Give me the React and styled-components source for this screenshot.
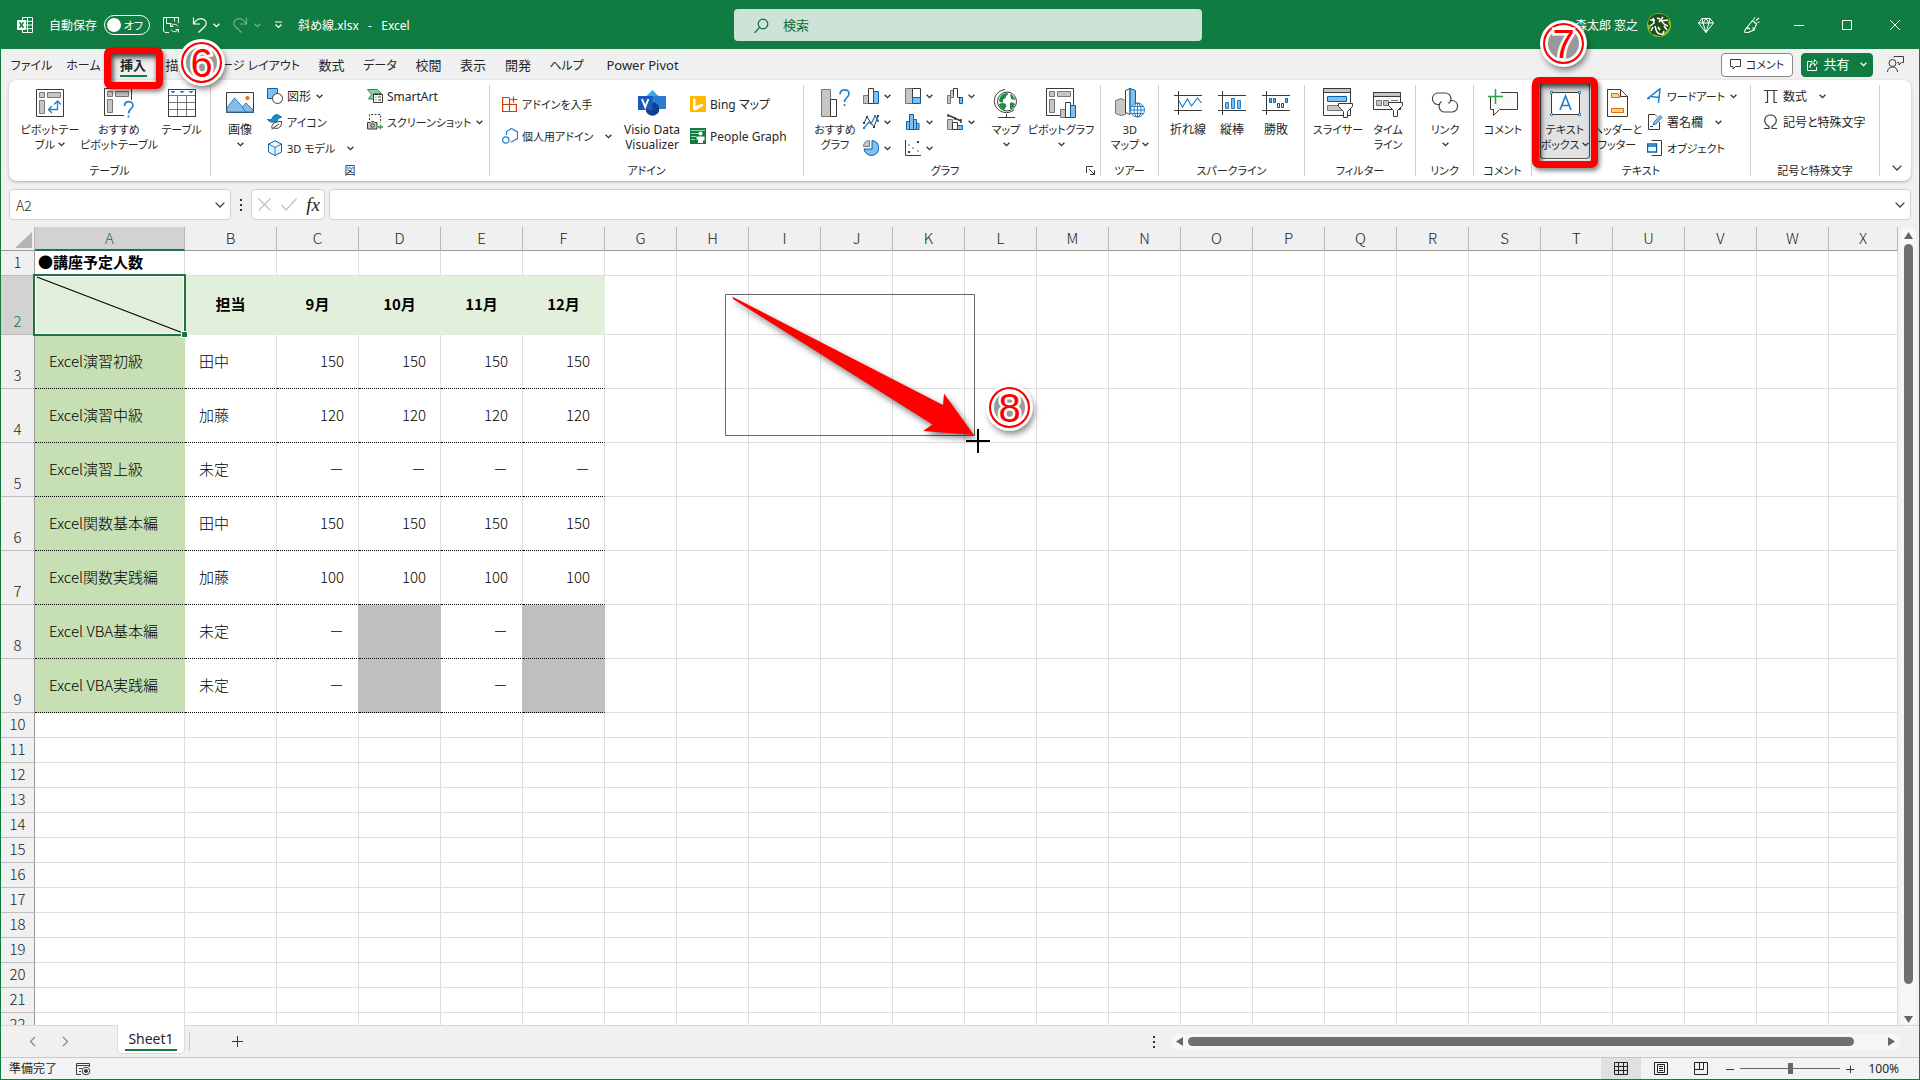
import React from "react";
import styled, { createGlobalStyle, css } from "styled-components";

const GREEN = "#107c41";
const INK = "#3b3a38";
const GREY = "#c8c6c4";
const SKY = "#83beec";
const BLUE = "#1e7fcb";
const UI = '"Noto Sans", "Noto Sans CJK JP", sans-serif';
const CELL = '"Noto Sans CJK JP", sans-serif';

const Global = createGlobalStyle`
  *, *::before, *::after { box-sizing: border-box; }
  body { margin: 0; background: #f0f0f0; overflow: hidden; }
  button, input { font: inherit; color: inherit; }
  button { border: 0; padding: 0; background: none; cursor: default; }
  svg { display: block; flex: none; }
`;

/* ---------- window ---------- */

const Window = styled.div`
  display: flex;
  flex-direction: column;
  height: 100vh;
  border: 1px solid ${GREEN};
  background: #f0f0f0;
  color: #262626;
  font: 12px/15px ${UI};
  font-feature-settings: "palt";
`;

const TitleBar = styled.header`
  display: flex;
  align-items: center;
  flex: none;
  height: 48px;
  background: ${GREEN};
  color: #fff;
`;

const TitleLeft = styled.div`
  flex: 1;
  display: flex;
  align-items: center;
  gap: 13px;
  padding-left: 16px;
  white-space: nowrap;
`;

const FileName = styled.span`
  margin-left: 2px;
  white-space: pre;
`;

const AutoSave = styled.label`
  display: flex;
  align-items: center;
  gap: 7px;
  margin-left: 3px;
`;

const Toggle = styled.span`
  position: relative;
  display: flex;
  align-items: center;
  justify-content: flex-end;
  width: 46px;
  height: 20px;
  padding-right: 6px;
  border: 1px solid #fff;
  border-radius: 10px;
  font-size: 11px;
  input {
    position: absolute;
    left: 2px;
    width: 14px;
    height: 14px;
    margin: 0;
    appearance: none;
    border-radius: 50%;
    background: #fff;
  }
`;

const QuickButton = styled.button`
  display: flex;
  align-items: center;
  gap: 6px;
  opacity: ${(p) => (p.$dim ? 0.4 : 1)};
`;

const Search = styled.label`
  display: flex;
  align-items: center;
  gap: 14px;
  width: 468px;
  height: 32px;
  padding: 0 20px;
  border-radius: 4px;
  background: #cfe2d7;
  color: ${GREEN};
  input {
    flex: 1;
    min-width: 0;
    padding: 0;
    border: 0;
    outline: 0;
    background: none;
    font-size: 13px;
  }
  input::placeholder { color: #0f6b39; opacity: 1; }
`;

const TitleRight = styled.div`
  flex: 1;
  display: flex;
  align-items: center;
  justify-content: flex-end;
`;

const Avatar = styled.span`
  display: block;
  margin: 0 12px 0 9px;
`;

const WindowButton = styled.button`
  display: flex;
  align-items: center;
  justify-content: center;
  width: ${(p) => (p.$tool ? 46 : 48)}px;
  height: 48px;
`;

/* ---------- ribbon tabs ---------- */

const TabRow = styled.nav`
  display: flex;
  align-items: center;
  flex: none;
  height: 31px;
  padding: 0 15px 0 4px;
`;

const Tab = styled.button`
  position: relative;
  width: ${(p) => p.$w}px;
  height: 31px;
  padding-top: 2px;
  display: flex;
  align-items: center;
  justify-content: center;
  white-space: nowrap;
  font-size: ${(p) => (p.$kana ? 12 : 13)}px;
  ${(p) =>
    p.$active &&
    css`
      font-weight: 700;
      &::after {
        content: "";
        position: absolute;
        left: 11px;
        right: 10px;
        bottom: 3px;
        height: 2px;
        background: ${GREEN};
      }
    `}
`;

const TabActions = styled.div`
  display: flex;
  align-items: center;
  gap: 8px;
  margin-left: auto;
`;

const ActionButton = styled.button`
  display: flex;
  align-items: center;
  justify-content: center;
  gap: 5px;
  width: 72px;
  height: 24px;
  border-radius: 4px;
  border: 1px solid ${(p) => (p.$primary ? GREEN : "#8a8886")};
  background: ${(p) => (p.$primary ? GREEN : "#fff")};
  color: ${(p) => (p.$primary ? "#fff" : "#262626")};
  font-size: ${(p) => (p.$primary ? 13 : 11)}px;
  white-space: nowrap;
  svg:nth-of-type(2) { margin-left: 5px; }
`;

const PlainButton = styled.button`
  margin-left: 6px;
`;

/* ---------- ribbon ---------- */

const RibbonCard = styled.section`
  display: flex;
  flex: none;
  height: 101px;
  margin: 0 8px;
  border-radius: 8px;
  background: #fff;
  box-shadow: 0 1px 3px rgba(0, 0, 0, 0.28);
`;

const Group = styled.div`
  display: flex;
  flex-direction: column;
  flex: none;
  width: ${(p) => p.$w}px;
  padding-top: 3px;
`;

const GroupBody = styled.div`
  display: flex;
  height: 78px;
  padding-left: ${(p) => p.$pad}px;
`;

const GroupLabel = styled.div`
  display: flex;
  height: 15px;
  margin-top: 2px;
  font-size: 11px;
  span { flex: 1; text-align: center; }
  button { width: 12px; margin-right: 2px; }
`;

const Divider = styled.div`
  flex: none;
  width: 1px;
  margin: 5px 0;
  background: #d2d0ce;
`;

const BigButton = styled.button`
  position: relative;
  display: flex;
  flex-direction: column;
  align-items: center;
  flex: none;
  width: ${(p) => p.$w}px;
  height: 76px;
  padding-top: 6px;
  white-space: nowrap;
  font-size: ${(p) => (p.$kana ? 11 : 12)}px;
  ${(p) =>
    p.$pressed &&
    css`
      border-radius: 4px;
      background: #e2e2e2;
      box-shadow: inset 0 0 0 1px #555;
    `}
`;

const IconBox = styled.span`
  display: flex;
  align-items: center;
  justify-content: center;
  height: 28px;
  margin-bottom: 5px;
`;

const BigLine = styled.span`
  display: flex;
  align-items: center;
  justify-content: center;
  gap: 3px;
  height: 15px;
`;

const Stack = styled.div`
  display: flex;
  flex-direction: column;
  flex: none;
  width: ${(p) => p.$w}px;
  padding-top: ${(p) => (p.$two ? 5 : 0)}px;
  button { height: ${(p) => (p.$two ? 32 : 26)}px; }
`;

const SmallButton = styled.button`
  display: flex;
  align-items: center;
  padding-left: 3px;
  white-space: nowrap;
  font-size: ${(p) => (p.$kana ? 11 : 12)}px;
  span { margin-left: 4px; }
  svg + span + svg { margin-left: ${(p) => p.$gap || 5}px; }
  svg + svg { margin-left: 5px; }
`;

const Collapse = styled.button`
  align-self: flex-end;
  padding: 10px 12px;
`;

/* ---------- formula bar ---------- */

const FormulaRow = styled.div`
  display: flex;
  align-items: center;
  flex: none;
  height: 31px;
  margin: 8px 8px 7px;
`;

const Field = styled.div`
  display: flex;
  align-items: center;
  height: 31px;
  border: 1px solid #d2d2d2;
  border-radius: 4px;
  background: #fff;
  ${(p) => (p.$w ? `width: ${p.$w}px;` : "flex: 1;")}
  justify-content: ${(p) => (p.$spread ? "space-between" : "flex-start")};
  padding: 0 ${(p) => (p.$spread ? 4 : 5)}px 0 6px;
  margin-right: ${(p) => (p.$spread ? 4 : 0)}px;
  input {
    flex: 1;
    min-width: 0;
    padding: 0;
    border: 0;
    outline: 0;
    background: none;
    font: 300 14px/20px ${CELL};
  }
`;

const Dots = styled.span`
  display: grid;
  gap: 3px;
  width: 2px;
  margin: 0 ${(p) => (p.$wide ? 16 : 9)}px 0 9px;
  i { width: 2px; height: 2px; background: #333; }
`;

const Fx = styled.button`
  font: italic 19px/24px "Liberation Serif", serif;
  color: #222;
`;

/* ---------- worksheet ---------- */

const SheetArea = styled.main`
  display: flex;
  flex: 1;
  min-height: 0;
  gap: 2px;
  padding-right: 3px;
`;

const SheetCanvas = styled.div`
  position: relative;
  flex: 1;
  min-width: 0;
  overflow: hidden;
`;

const Grid = styled.table`
  width: 100%;
  table-layout: fixed;
  border-collapse: separate;
  border-spacing: 0;
  background: #fff;
  color: #000;
  font: 15px/22px ${CELL};
  font-feature-settings: normal;
  th, td { white-space: nowrap; overflow: visible; }
`;

const ColHead = styled.th`
  height: 24px;
  padding: 0 0 1px;
  border-right: 1px solid #b8b8b8;
  border-bottom: ${(p) => (p.$on ? "2px solid #217346" : "1px solid #9b9b9b")};
  background: ${(p) => (p.$on ? "#d2d2d2" : "#f0f0f0")};
  color: ${(p) => (p.$on ? "#217346" : "#222")};
  font-weight: 300;
  line-height: 20px;
`;

const Corner = styled(ColHead)`
  svg { margin: 3px 2px 0 auto; }
`;

const RowHead = styled.th`
  height: ${(p) => p.$h}px;
  padding: 0 0 2px;
  vertical-align: bottom;
  border-right: 1px solid #9b9b9b;
  border-bottom: 1px solid #bdbdbd;
  background: ${(p) => (p.$on ? "#d2d2d2" : "#f0f0f0")};
  color: ${(p) => (p.$on ? "#217346" : "#222")};
  font-weight: 300;
  line-height: 22px;
`;

const Cell = styled.td`
  position: relative;
  border-right: 1px solid ${(p) => p.$line || p.$fill || "#dedede"};
  border-bottom: 1px ${(p) => (p.$dotted ? "dotted #000" : `solid ${p.$fill || "#dedede"}`)};
  background: ${(p) => p.$fill || "#fff"};
  text-align: ${(p) => p.$align || "left"};
  font-weight: ${(p) => (p.$bold ? 700 : 300)};
  padding: 0 ${(p) => (p.$flush ? 0 : 14)}px 2px ${(p) => (p.$flush ? 3 : 14)}px;
`;

const Selection = styled.div`
  position: absolute;
  z-index: 1;
  inset: -2px;
  border: 2px solid #217346;
  box-shadow: inset 0 0 0 1px #fff;
  svg { width: 100%; height: 100%; }
  &::after {
    content: "";
    position: absolute;
    right: -4px;
    bottom: -4px;
    width: 7px;
    height: 7px;
    border: 1px solid #fff;
    background: #217346;
  }
`;

const Drawing = styled.svg`
  position: absolute;
  z-index: 2;
  left: 719px;
  top: 60px;
  overflow: visible;
`;

const Scroll = styled.div`
  display: flex;
  flex-direction: ${(p) => (p.$v ? "column" : "row")};
  align-items: center;
  gap: 5px;
  padding: ${(p) => (p.$v ? "5px 0" : "0 5px")};
  border-radius: 8px;
  background: #f7f7f7;
  ${(p) => (p.$v ? "width: 16px; margin-bottom: -3px;" : "width: 729px; height: 16px;")}
`;

const Thumb = styled.div`
  flex: ${(p) => p.$size};
  ${(p) => (p.$v ? "width" : "height")}: 9px;
  border-radius: 5px;
  background: #707070;
`;

const Rest = styled.div`
  flex: ${(p) => p.$size};
`;

/* ---------- bottom bars ---------- */

const SheetTabs = styled.div`
  display: flex;
  align-items: center;
  flex: none;
  height: 32px;
  padding-right: 19px;
  border-top: 1px solid #d8d8d8;
`;

const NavButtons = styled.div`
  display: flex;
  gap: 26px;
  width: 116px;
  padding-left: 28px;
`;

const SheetTab = styled.button`
  align-self: flex-start;
  width: 68px;
  height: 29px;
  margin-top: -1px;
  border: 1px solid #dcdcdc;
  border-top: 0;
  border-radius: 0 0 5px 5px;
  background: #fff;
  font-size: 14px;
  line-height: 20px;
  span {
    display: block;
    width: 52px;
    margin: 1px auto 0;
    border-bottom: 2px solid ${GREEN};
  }
`;

const AddSheet = styled.button`
  height: 18px;
  margin: 0 auto 0 4px;
  padding-left: 42px;
  border-left: 1px solid #c8c8c8;
`;

const StatusBar = styled.footer`
  display: flex;
  align-items: center;
  flex: none;
  height: 22px;
  padding: 0 20px 0 8px;
  border-top: 1px solid #c8c8c8;
  background: #f3f3f3;
`;

const StatusText = styled.span`
  margin-right: 19px;
`;

const ViewButtons = styled.div`
  display: flex;
  margin-left: auto;
`;

const ViewButton = styled.button`
  display: flex;
  align-items: center;
  justify-content: center;
  width: 40px;
  height: 21px;
  background: ${(p) => (p.$on ? "#e0e0e0" : "none")};
`;

const Zoom = styled.label`
  display: flex;
  align-items: center;
  gap: 6px;
  margin-left: 5px;
  input {
    width: 100px;
    height: 12px;
    margin: 0;
    appearance: none;
    background: linear-gradient(#666, #666) center / 100% 1px no-repeat;
  }
  input::-webkit-slider-thumb {
    appearance: none;
    width: 5px;
    height: 11px;
    background: #666;
  }
  span { width: 39px; text-align: right; }
`;

/* ---------- callouts ---------- */

const RedFrame = styled.span`
  position: absolute;
  z-index: 3;
  inset: ${(p) => p.$inset};
  border: 7px solid #f00;
  border-radius: 7px;
  filter: drop-shadow(2px 3px 2px rgba(0, 0, 0, 0.45));
  box-shadow: inset 1px 2px 5px rgba(0, 0, 0, 0.5);
`;

const Badge = styled.span`
  position: absolute;
  z-index: 4;
  left: ${(p) => p.$x}px;
  top: ${(p) => p.$y}px;
  display: flex;
  align-items: center;
  justify-content: center;
  width: 41px;
  height: 41px;
  border: 2px solid #f00;
  border-radius: 50%;
  background: #999;
  box-shadow: 0 0 0 3px #fff, 2px 4px 6px 2px rgba(0, 0, 0, 0.5), inset 0 0 0 3px #fff;
  color: #f00;
  font: 400 40px/40px "Liberation Sans", sans-serif;
  -webkit-text-stroke: 5px #fff;
  paint-order: stroke fill;
`;

/* ---------- icons ---------- */

const Svg = ({ w = 16, h = w, children, ...rest }) => (
  <svg width={w} height={h} viewBox={`0 0 ${w} ${h}`} fill="none" stroke={INK} aria-hidden="true" {...rest}>
    {children}
  </svg>
);

const Chevron = ({ color = "#333" }) => (
  <Svg w={7} h={5} stroke={color} strokeWidth="1.3">
    <path d="M.6 .8 3.5 3.7 6.4 .8" />
  </Svg>
);
const WideChevron = () => (
  <Svg w={10} h={6} strokeWidth="1.3"><path d="M.6 .6 5 5 9.4 .6" /></Svg>
);

const PivotBase = () => (
  <>
    <path fill="#fff" d="M.5 .5h27v27H.5z" />
    <path fill={GREY} stroke="#797775" d="M3.5 3.5h5v5h-5zM11.5 3.5h13v5h-13zM3.5 11.5h5v13h-5z" />
  </>
);
const I = {
  excel: (
    <Svg stroke="#fff">
      <path d="M5.500 3V.5h10v15h-10V13M5.500 4.300h10M5.500 8h10M5.500 11.700h10M10.500 .5v15" />
      <path fill="#fff" d="M.5 3.500h8v9h-8z" />
      <path stroke={GREEN} strokeWidth="1.500" d="m2.500 5.300 4 5.400M6.500 5.300l-4 5.400" />
    </Svg>
  ),
  save: (
    <Svg stroke="#fff">
      <path d="M6 15.500H2L.5 14V.5h15V6M3.500 .5v6h5M11.500 .5v4" />
      <path d="M7.500 9.500v-3M7.500 9.500h3M7.700 9.300c1.500-2.500 5.500-2.800 7.300 0M15.500 12.500v3M15.500 12.500h-3M15.300 12.700c-1.500 2.500-5.500 2.800-7.300 0" />
    </Svg>
  ),
  undo: (
    <Svg w={15} h={16} stroke="#fff" strokeWidth="1.200">
      <path d="M1.500 .5v6.500h6.500M1.700 6.800C4 2.500 8 .6 11.500 2.200c3 1.500 3.500 4.800 1.200 7.300L6.500 15.500" />
    </Svg>
  ),
  redo: (
    <Svg w={15} h={16} stroke="#fff" strokeWidth="1.200">
      <path d="M13.500 .5v6.500H7M13.300 6.800C11 2.500 7 .6 3.500 2.200c-3 1.500-3.500 4.800-1.200 7.300L8.500 15.500" />
    </Svg>
  ),
  custom: (
    <Svg w={9} h={8} stroke="#fff" strokeWidth="1.200"><path d="M1 1h7M1.500 3.500l3 3 3-3" /></Svg>
  ),
  search: (
    <Svg w={15} stroke="#0f6b39" strokeWidth="1.200"><circle cx="9" cy="6" r="4.800" /><path d="M5.600 9.400.5 15" /></Svg>
  ),
  avatar: (
    <Svg w={24} stroke="none">
      <circle cx="12" cy="12" r="12" fill="#8dc21f" />
      <path fill="#1f4d1a" d="M2 6C7-1 17-1 22 6l-1 4 2 3-2 4-4 3-3 3.500L5 21 2 17l2-3-3-3z" />
      <path stroke="#fff" strokeWidth="1.500" d="M3 7h5M6 5l1 5-4 3M10 5l3 1M16 4l-4 5M13 8l8-1M15 8c1 3 3 4 6 5M6 14l-2 4M8 13c1 5 2 9 8 8l1-3M11 14l2 3M17 13l3 4" />
    </Svg>
  ),
  gem: (
    <Svg stroke="#fff"><path d="M4 1.500h8l3.500 4.500L8 15.500.5 6zM.5 6h15M5 6l3 9.500L11 6M4 1.500 5 6l3-4.500L11 6l1-4.500" /></Svg>
  ),
  pen: (
    <Svg stroke="#fff" strokeWidth="1.100">
      <path d="m8.500 3.500 4 3.500-2.500 6-6 2.500L.8 15.300 1 13zM2.500 12c1-1.500 3-1 3.500.5M8 14c1.500-.5 2-2.500.5-3.500M9.500 2.500 11 .5M12 3.500 15 1M13.500 5.500l2-.5" />
    </Svg>
  ),
  min: <Svg w={10} stroke="#fff"><path d="M0 5.500h10" /></Svg>,
  max: <Svg w={10} stroke="#fff"><path d="M.5 .5h9v9h-9z" /></Svg>,
  close: <Svg w={10} stroke="#fff"><path d="m0 0 10 10M10 0 0 10" /></Svg>,
  bubble: <Svg w={11}><path d="M.5 .5h10v7h-5L3 10V7.500H.5z" /></Svg>,
  share: (
    <Svg w={11} h={12} stroke="#fff"><path d="M5 2.500H.5v9h9V8M3 8.500C3 6 5 4.500 7.500 4.500V7L10.500 3.500 7.500 .5v2C5 2.500 3 5 3 8.500z" /></Svg>
  ),
  person: (
    <Svg w={17}><circle cx="5.500" cy="7" r="3.500" /><path d="M.5 16c0-3 2-5 5-5s5 2 5 5M7 1.500V.5h9.500v6h-2L12 9V6.500h-1.500" /></Svg>
  ),
  pivot: (
    <Svg w={28}><PivotBase /><path stroke={BLUE} strokeWidth="1.300" d="M13 20.500h8.500V13M16 17l-3.500 3.500L16 24M18 15.500l3.500-3.500 3.500 3.500" /></Svg>
  ),
  recPivot: (
    <Svg w={30}>
      <path fill="#fff" stroke="none" d="M.5 .5h27v27H.5z" />
      <path d="M27.500 12V.5H.5v27H20" />
      <path fill={GREY} stroke="#797775" d="M3.500 3.500h5v5h-5zM11.500 3.500h13v5h-13zM3.500 11.500h5v13h-5z" />
      <path stroke={BLUE} strokeWidth="1.600" d="M20.500 18c0-6 8.500-5.500 8.500-.5 0 3-4.500 3.500-4.500 8M24.500 27.500v2" />
    </Svg>
  ),
  table: (
    <Svg w={28}>
      <path fill="#fff" d="M.5 .5h27v27H.5z" />
      <path stroke="#797775" d="M1 6.500h26M1 13.500h26M1 20.500h26M9.500 6v21M18.500 6v21" />
      <path stroke="none" fill={BLUE} d="M2.500 2h5L5 4.500zM11.500 2h5L14 4.500zM20.500 2h5L23 4.500z" />
      <path d="M.5 .5h27v27H.5z" />
    </Svg>
  ),
  picture: (
    <Svg w={28}>
      <path fill="#fafafa" d="M.5 3.500h27v20H.5z" />
      <path fill={SKY} stroke={BLUE} d="M1 19 8.500 9l8 9 3.500-4 7 7v2H1zM16 18l4 5" />
      <circle cx="21.500" cy="9" r="2" fill="#e07000" stroke="none" />
    </Svg>
  ),
  shapes: (
    <Svg><path fill={SKY} stroke="#0063b1" d="M.5 .5h10v10H.5z" /><circle cx="10.500" cy="10.500" r="5" fill="#fff" /></Svg>
  ),
  icons: (
    <Svg>
      <path fill="#1e8bcd" stroke="#0063b1" d="M.5 5.500 4 6l3-4.500 3-1L14.500 3 11 4.500 9.500 8H3.500z" />
      <path fill="#fff" d="M5 14.500c-1-5 3-7 9.500-7 .5 5-2.500 8-8 6.500L12 10M5 15.500l1.500-2" />
    </Svg>
  ),
  cube: (
    <Svg stroke="#0063b1"><path fill="#eaf4fc" d="M8 .8 14.500 4v8L8 15.500 1.500 12V4z" /><path stroke={BLUE} d="M1.500 4 8 7.500 14.500 4M8 7.500v8" /></Svg>
  ),
  smart: (
    <Svg>
      <path fill="#8fd19e" stroke="#2e8b57" d="M.5 1.500h10l4 4h-8V11h-5l3-4.500z" />
      <path fill="#fff" d="M6.500 6.500h9v8h-9z" /><path d="M8.500 9h1M11 9h3M8.500 12h1M11 12h3" />
    </Svg>
  ),
  shot: (
    <Svg>
      <path strokeDasharray="2 1.500" d="M2.500 6V.5h11V9" />
      <path fill={GREY} d="M.5 8.500h3l1-1h2l1 1h2.500v6.500H.5z" /><circle cx="5.500" cy="11.500" r="1.800" />
      <path stroke="#27a046" strokeWidth="1.300" d="M13.500 10.500v5M11 13h5" />
    </Svg>
  ),
  addin: (
    <Svg stroke="#d83b01" strokeWidth="1.200"><path d="M7 1.500H.6v14h13.800V8.500H.6M7.500 1.500v14M11.500 .5v6M8.500 3.500h7" /></Svg>
  ),
  myAddin: (
    <Svg stroke={BLUE} strokeWidth="1.200"><path d="M4.500 7V3.500l5-3 6 3.500v6.500l-6 3.500h-1" /><circle cx="3.800" cy="12" r="3.200" /></Svg>
  ),
  visio: (
    <Svg w={28} stroke="none">
      <path fill="#41a5ee" d="m14.500 1 7 7-7 7-7-7z" /><path fill="#2b7cd3" d="M14 7h14v13H14z" />
      <circle cx="14.500" cy="20" r="6.800" fill="#103f91" /><path fill="#185abd" d="M0 7h14.500v14H0z" />
      <path stroke="#fff" strokeWidth="2" d="m4 10 3.200 8 3.200-8" />
    </Svg>
  ),
  bing: (
    <Svg stroke="none"><path fill="#ffb900" d="M0 0h16v16H0z" /><path fill="#fff" d="m3 2 2.500 1v7L13 7.500V10l-7.500 4.500L3 13z" /></Svg>
  ),
  people: (
    <Svg stroke="none">
      <path fill="#107c41" d="M0 0h16v16H0z" /><path stroke="#9fd3b5" d="M1 2.500h14M1 5.500h8M1 8.500h5M1 11.500h4" />
      <circle cx="10.500" cy="5.500" r="2" fill="#fff" /><path fill="#fff" d="M6.500 8.500h8v4h-1.500V15H8v-3.500H6.500z" />
    </Svg>
  ),
  recChart: (
    <Svg w={29}>
      <path fill={GREY} stroke="#797775" d="M.5 .5h9v27h-9z" /><path fill="#fff" d="M9.500 10.500h6v17h-6z" />
      <path stroke={BLUE} strokeWidth="1.600" d="M19 5.500C19-.5 28-.5 28 4.500c0 4-4.500 4-4.500 8.500M23.500 15v2" />
    </Svg>
  ),
  bar: (
    <Svg><path fill={GREY} stroke="#797775" d="M.5 7.500h5v8h-5z" /><path fill="#fff" d="M5.500 .5h5v15h-5z" /><path fill={SKY} stroke="#0063b1" d="M10.500 3.500h5v12h-5z" /></Svg>
  ),
  tree: (
    <Svg><path fill={GREY} stroke="#797775" d="M.5 .5h7v15h-7z" /><path fill="#fff" d="M7.500 .5h8v9h-8z" /><path fill={SKY} stroke="#0063b1" d="M7.500 9.500h8v6h-8z" /></Svg>
  ),
  water: (
    <Svg><path fill={GREY} stroke="#797775" d="M.5 7.500h3v8h-3zM3.500 2.500h3v7h-3z" /><path d="M6.500 .5h4v9M6.500 .5v7" /><path fill={SKY} stroke="#0063b1" d="M12.500 9.500h3v6h-3z" /><path d="M10.500 9.500h5" /></Svg>
  ),
  line: (
    <Svg>
      <path d="m1 9 3-6 7 10 4-11" /><path stroke={BLUE} strokeWidth="1.300" d="m1 14 5-6 2 2 4-8 3.500 5" />
      <path fill={INK} stroke="none" d="M0 8h2v2H0zM3 2h2v2H3zM10 12h2v2h-2zM14 1h2v2h-2z" />
      <path fill={BLUE} stroke="none" d="M0 13h2v2H0zM14 6h2v2h-2zM11 1h2v2h-2z" />
    </Svg>
  ),
  histo: (
    <Svg><path fill={SKY} stroke="#0063b1" d="M1.500 7.500h3v8h-3zM4.500 .5h4v15h-4zM8.500 5.500h3v10h-3zM11.500 9.500h2.500v6h-2.500z" /></Svg>
  ),
  combo: (
    <Svg><path fill={GREY} stroke="#797775" d="M.5 5.500h5v10h-5z" /><path fill="#fff" d="M5.500 8.500h5v7h-5z" /><path fill={SKY} stroke="#0063b1" d="M10.500 11.500h5v4h-5z" /><path strokeWidth="1.500" d="M2 1.500 14 7M1 0v3M8 3v3M14 5v4" /></Svg>
  ),
  pie: (
    <Svg><path fill={SKY} stroke="#0063b1" d="M9 .5A7.500 7.500 0 1 1 1 9h8z" /><path fill={GREY} stroke="#797775" d="M6.500 .5v6h-6c0-3.500 2.500-6 6-6z" /></Svg>
  ),
  scatter: (
    <Svg><path d="M.5 0v15.500H16" /><path fill={INK} stroke="none" d="M12 1h2v2h-2zM3 11h2v2H3z" /><path fill={SKY} stroke="none" d="M3 4h2v2H3zM7 7h2v2H7zM12 10h2v2h-2z" /></Svg>
  ),
  globe: (
    <Svg w={26} h={29}>
      <circle cx="14" cy="12.500" r="9.500" fill="#fff" />
      <path fill="#1f8f3f" stroke="none" d="M7 8c2-3 5-4.500 8-4 0 3-2 2-2 4s-3 1-3 4-4 1-4 0zM17 5c3 1 5 4 5 6l-4-1zM9 14c3 0 5 1 4 4l-2 3c-3-1-5-4-5-6zM17 14c2-1 4 0 5 1-1 3-3 5-5 5.500z" />
      <path d="M12 .5C3 1.500-1.500 11 3 18c4 6 12 7.500 18 3M13.500 25v3M5 28.500h17" />
    </Svg>
  ),
  pivotChart: (
    <Svg w={30}>
      <PivotBase />
      <path fill={GREY} stroke="#797775" d="M14.500 21.500h5v8h-5z" /><path fill="#fff" d="M19.500 14.500h5v15h-5z" /><path fill={SKY} stroke="#0063b1" d="M24.500 17.500h5v12h-5z" />
    </Svg>
  ),
  map3d: (
    <Svg w={30} h={30}>
      <path fill={GREY} stroke="#797775" d="M.5 12.500 6 10.500l4.500 2v14L6 27.500l-5.500-2z" />
      <path fill="#fff" d="M10.500 2.500 15 .5v26l-4.500-2z" /><path fill={SKY} stroke="#0063b1" d="M15 .5l5.500 2V22H15z" />
      <circle cx="22.500" cy="22" r="7" fill="#fff" stroke={BLUE} />
      <path stroke={BLUE} d="M15.500 22h14M22.500 15v14M17 18.500h11M17 25.500h11" /><ellipse cx="22.500" cy="22" rx="3.500" ry="7" stroke={BLUE} />
    </Svg>
  ),
  sparkLine: (
    <Svg w={28}><path d="M4.500 2v24M0 6.500h28M0 21.500h28" /><path stroke={BLUE} strokeWidth="1.200" d="m5 12 3.500 6 5-8 4 7 6-8 4 5" /></Svg>
  ),
  sparkCol: (
    <Svg w={28}><path d="M4.500 2v24M0 6.500h28M0 21.500h28" /><path fill={SKY} stroke={BLUE} d="M7.500 13.500h3v6h-3zM13.500 9.500h3v10h-3zM19.500 11.500h3v8h-3z" /></Svg>
  ),
  sparkWin: (
    <Svg w={28}><path d="M4.500 2v24M0 6.500h28M0 21.500h28" /><path fill={SKY} stroke="#0063b1" d="M7.500 9.500h2v4h-2zM11.500 9.500h2v4h-2zM23.500 9.500h2v4h-2z" /><path d="M15.500 14.500h2v4h-2zM19.500 14.500h2v4h-2z" /></Svg>
  ),
  slicer: (
    <Svg w={30} h={30}>
      <path fill="#fafafa" d="M.5 .5h27v27H.5z" /><path fill={GREY} d="M.5 .5h27v4H.5z" />
      <path fill={SKY} stroke="#0063b1" d="M4.500 8.500h19v5h-19z" /><path fill={GREY} stroke="#797775" d="M4.500 17.500h15v5h-15z" />
      <path fill="#fff" d="M15.500 15.500h14v3l-5 5v6h-4v-6l-5-5z" />
    </Svg>
  ),
  timeline: (
    <Svg w={30} h={28}>
      <path fill="#fafafa" d="M.5 3.500h27v17H.5z" /><path fill={GREY} d="M.5 3.500h27v4H.5z" />
      <path fill={GREY} stroke="#797775" d="M3.500 11.500h5v5h-5zM10.500 11.500h5v5h-5zM18 11.500h7" />
      <path fill="#fff" d="M15.500 13.500h14v3l-5 5v6h-4v-6l-5-5z" />
    </Svg>
  ),
  link: (
    <Svg w={28} h={22} stroke="#444" strokeWidth="1.200">
      <path d="M9 12.500H6.500a5.800 5.800 0 0 1 0-11.500h8a5.800 5.800 0 0 1 3 10.500" />
      <path d="M19 8.500h2.500a5.800 5.800 0 0 1 0 11.500h-8a5.800 5.800 0 0 1-3-10.500" />
    </Svg>
  ),
  comment: (
    <Svg w={30} h={28}><path fill="#fafafa" d="M2.500 8v12.500h3v6l6-6h18v-17H13" /><path stroke="#27a046" strokeWidth="1.500" d="M7.500 0v15M0 7.500h15" /></Svg>
  ),
  textbox: (
    <Svg w={31} h={28}>
      <path fill="#fff" d="M1.500 3.500h28v22h-28z" /><path fill="#fff" stroke={BLUE} d="M.5 2.500h2v2h-2zM28.500 2.500h2v2h-2zM.5 24.500h2v2h-2zM28.500 24.500h2v2h-2z" />
      <path stroke={BLUE} strokeWidth="1.600" d="m10 21 5.500-14L21 21M12 16.500h7" />
    </Svg>
  ),
  header: (
    <Svg w={21} h={28}><path fill="#fff" d="M.5 .5h13l7 7v20H.5zM13.500 .5v7h7" /><path fill="#ffd08a" stroke="#e07000" d="M4.500 4.500H11l2 4H4.500zM4.500 19.500h12v4h-12z" /></Svg>
  ),
  wordart: <Svg stroke={BLUE} strokeWidth="1.500"><path d="M1 10 13 .8 11.500 15M3.500 8.500l9 1M0 10.500h3" /></Svg>,
  sign: (
    <Svg><path fill="#fff" d="M12.500 8v7.500h-11V.5H8l2 2" /><path d="M3 12.500h3" /><path fill={SKY} stroke={BLUE} d="M6 11l1-3 6-6.500 2 2-6 6.500z" /></Svg>
  ),
  object: (
    <Svg><path fill="#fff" d="M4.500 .5h10v15h-10" /><path fill="#fff" stroke="#0063b1" strokeWidth="1.300" d="M.6 4h9v8h-9zM.6 6h9" /></Svg>
  ),
  pi: <Svg strokeWidth="1.200"><path d="M1 2.500h13.500M4.500 2.500v12H2M11 2.500v12h3" /></Svg>,
  omega: <Svg strokeWidth="1.200"><path d="M1 14.500h5v-2C-1.500 8 2 1 7.500 1s9 7 1.500 11.500v2h5" /></Svg>,
  launcher: <Svg w={9}><path d="M.5 7V.5H7M3 3l5 5M8.500 4v4.500H4" /></Svg>,
  prev: <Svg w={7} h={11} stroke="#8a8a8a" strokeWidth="1.300"><path d="M6 1 1.500 5.500 6 10" /></Svg>,
  next: <Svg w={7} h={11} stroke="#8a8a8a" strokeWidth="1.300"><path d="m1 1 4.500 4.500L1 10" /></Svg>,
  plus: <Svg w={11}><path d="M5.500 0v11M0 5.500h11" /></Svg>,
  macro: (
    <Svg w={15} h={14}><path d="M5 12.500H.5V1.500h13V5M.5 3.500h13M3 6.500h3M3 9.500h2" /><circle cx="10" cy="9" r="3.800" /><circle cx="10" cy="9" r="1.500" fill={INK} /></Svg>
  ),
  viewGrid: <Svg w={14} h={13} stroke="#222"><path d="M.5 .5h13v12H.5zM.5 4.500h13M.5 8.500h13M4.500 .5v12M9.500 .5v12" /></Svg>,
  viewPage: <Svg w={14} h={13} stroke="#222"><path d="M.5 .5h13v12H.5zM3.500 2.500h7v8h-7zM5 4.500h4M5 6.500h4M5 8.500h4" /></Svg>,
  viewBreak: <Svg w={14} h={13} stroke="#222"><path d="M.5 .5h13v12H.5zM.5 7.500h9v-7M5.500 .5v7" /></Svg>,
  zoomOut: <Svg w={8}><path d="M0 4.500h8" /></Svg>,
  zoomIn: <Svg w={8}><path d="M0 4.500h8M4.500 .5v8" /></Svg>,
};

/* ---------- composed parts ---------- */

const Big = ({ icon, lines, w, kana, chevron, inline, pressed, children }) => (
  <BigButton $w={w} $kana={kana} $pressed={pressed}>
    <IconBox>{icon}</IconBox>
    {lines.map((text, i) => (
      <BigLine key={text}>
        {text}
        {inline && i === lines.length - 1 && <Chevron />}
      </BigLine>
    ))}
    {chevron && <BigLine><Chevron /></BigLine>}
    {children}
  </BigButton>
);

const Small = ({ icon, label, kana, chevron, gap, name }) => (
  <SmallButton $kana={kana} $gap={gap} aria-label={name}>
    {icon}
    {label && <span>{label}</span>}
    {chevron && <Chevron />}
  </SmallButton>
);

const RibbonGroup = ({ w, pad, label, launcher, children }) => (
  <>
    <Group $w={w}>
      <GroupBody $pad={pad}>{children}</GroupBody>
      <GroupLabel>
        <span>{label}</span>
        {launcher && <button aria-label="グラフの設定">{I.launcher}</button>}
      </GroupLabel>
    </Group>
    <Divider />
  </>
);

const tabs = [
  ["ファイル", 53, true], ["ホーム", 51, true], ["挿入", 48], ["描画", 43], ["ページ レイアウト", 109, true],
  ["数式", 45], ["データ", 52, true], ["校閲", 45], ["表示", 44], ["開発", 46], ["ヘルプ", 51, true], ["Power Pivot", 101],
];

const columns = "ABCDEFGHIJKLMNOPQRSTUVWX".split("");
const widths = { A: 150, B: 92, C: 82, D: 82, E: 82, F: 82 };
const data = [
  ["Excel演習初級", "田中", "150", "150", "150", "150"],
  ["Excel演習中級", "加藤", "120", "120", "120", "120"],
  ["Excel演習上級", "未定", "－", "－", "－", "－"],
  ["Excel関数基本編", "田中", "150", "150", "150", "150"],
  ["Excel関数実践編", "加藤", "100", "100", "100", "100"],
  ["Excel VBA基本編", "未定", "－", null, "－", null],
  ["Excel VBA実践編", "未定", "－", null, "－", null],
];
const heading = ["", "担当", "9月", "10月", "11月", "12月"];
const ROWS = 22;

const renderCell = (row, col) => {
  if (row === 1 && col === 0) return <Cell key={col} $bold $flush>●講座予定人数</Cell>;
  if (row === 2 && col < 6)
    return (
      <Cell key={col} $fill="#e2efda" $bold $align="center">
        {heading[col]}
        {col === 0 && (
          <Selection>
            <svg viewBox="0 0 149 57" preserveAspectRatio="none">
              <path d="M2 1 148 56" stroke="#000" strokeWidth="1" />
            </svg>
          </Selection>
        )}
      </Cell>
    );
  const record = data[row - 3];
  if (record && col < 6) {
    const value = record[col];
    if (value === null) return <Cell key={col} $fill="#bfbfbf" $dotted />;
    return (
      <Cell
        key={col}
        $dotted
        $fill={col === 0 ? "#c6e0b4" : undefined}
        $line={record[col + 1] === null ? "#bfbfbf" : undefined}
        $align={col > 1 ? "right" : "left"}
      >
        {value}
      </Cell>
    );
  }
  return <Cell key={col} />;
};

const rowHeight = (row) => (row === 2 ? 59 : row > 2 && row < 10 ? 54 : 25);

const Sheet = () => (
  <SheetCanvas>
    <Grid>
      <colgroup>
        <col style={{ width: 34 }} />
        {columns.map((c, i) => (
          <col key={c} style={i < columns.length - 1 ? { width: widths[c] || 72 } : undefined} />
        ))}
      </colgroup>
      <thead>
        <tr>
          <Corner aria-label="すべて選択">
            <Svg w={17} h={16} stroke="none"><path fill="#b4b4b4" d="M17 0v16H0z" /></Svg>
          </Corner>
          {columns.map((c) => <ColHead key={c} $on={c === "A"}>{c}</ColHead>)}
        </tr>
      </thead>
      <tbody>
        {Array.from({ length: ROWS }, (_, i) => i + 1).map((row) => (
          <tr key={row}>
            <RowHead $h={rowHeight(row)} $on={row === 2}>{row}</RowHead>
            {columns.map((_, col) => renderCell(row, col))}
          </tr>
        ))}
      </tbody>
    </Grid>
    <Drawing width="280" height="180" viewBox="0 0 280 180" fill="none">
      <path stroke="#666" d="M5.500 7.500h249v141h-249z" />
      <path
        fill="#f00"
        style={{ filter: "drop-shadow(3px 4px 3px rgba(0,0,0,.5))" }}
        d="M12.500 9.500 14 10.500 223 118l1-11.500L254 148l-51-4 9.500-6.500L13 12z"
      />
      <path stroke="#000" strokeWidth="2" d="M246 154h24M258 142v24" />
    </Drawing>
    <Badge $x={988} $y={160}>8</Badge>
  </SheetCanvas>
);

const Arrow = ({ d, w, h }) => (
  <Svg w={w} h={h} stroke="none"><path fill="#666" d={d} /></Svg>
);

export default function App() {
  return (
    <Window>
      <Global />
      <TitleBar>
        <TitleLeft>
          {I.excel}
          <AutoSave>
            自動保存
            <Toggle><input type="checkbox" />オフ</Toggle>
          </AutoSave>
          <QuickButton aria-label="保存">{I.save}</QuickButton>
          <QuickButton aria-label="元に戻す">{I.undo}<Chevron color="#fff" /></QuickButton>
          <QuickButton aria-label="やり直し" $dim>{I.redo}<Chevron color="#fff" /></QuickButton>
          <QuickButton aria-label="カスタマイズ">{I.custom}</QuickButton>
          <FileName>{"斜め線.xlsx   -   Excel"}</FileName>
        </TitleLeft>
        <Search>
          {I.search}
          <input type="search" placeholder="検索" aria-label="検索" />
        </Search>
        <TitleRight>
          森太郎 窓之
          <Avatar>{I.avatar}</Avatar>
          <WindowButton $tool aria-label="Premium">{I.gem}</WindowButton>
          <WindowButton $tool aria-label="ペン">{I.pen}</WindowButton>
          <WindowButton aria-label="最小化">{I.min}</WindowButton>
          <WindowButton aria-label="最大化">{I.max}</WindowButton>
          <WindowButton aria-label="閉じる">{I.close}</WindowButton>
        </TitleRight>
      </TitleBar>

      <TabRow>
        {tabs.map(([label, w, kana]) => (
          <Tab key={label} $w={w} $kana={kana} $active={label === "挿入"}>
            {label}
            {label === "挿入" && (
              <>
                <RedFrame $inset="-2px -6px -9px -5px" />
                <Badge $x={72} $y={-7}>6</Badge>
              </>
            )}
          </Tab>
        ))}
        <TabActions>
          <ActionButton>{I.bubble}コメント</ActionButton>
          <ActionButton $primary>{I.share}共有 <Chevron color="#fff" /></ActionButton>
          <PlainButton aria-label="共同作業者">{I.person}</PlainButton>
        </TabActions>
      </TabRow>

      <RibbonCard>
        <RibbonGroup w={201} pad={11} label="テーブル">
          <Big icon={I.pivot} w={60} kana lines={["ピボットテー", "ブル"]} inline />
          <Big icon={I.recPivot} w={78} kana lines={["おすすめ", "ピボットテーブル"]} />
          <Big icon={I.table} w={47} kana lines={["テーブル"]} />
        </RibbonGroup>
        <RibbonGroup w={278} pad={5} label="図">
          <Big icon={I.picture} w={48} lines={["画像"]} chevron />
          <Stack $w={100}>
            <Small icon={I.shapes} label="図形" chevron />
            <Small icon={I.icons} label="アイコン" kana />
            <Small icon={I.cube} label="3D モデル" kana chevron gap={12} />
          </Stack>
          <Stack $w={120}>
            <Small icon={I.smart} label="SmartArt" />
            <Small icon={I.shot} label="スクリーンショット" kana chevron />
          </Stack>
        </RibbonGroup>
        <RibbonGroup w={313} pad={9} label="アドイン">
          <Stack $w={118} $two>
            <Small icon={I.addin} label="アドインを入手" kana />
            <Small icon={I.myAddin} label="個人用アドイン" kana chevron gap={12} />
          </Stack>
          <Big icon={I.visio} w={70} lines={["Visio Data", "Visualizer"]} />
          <Stack $w={110} $two>
            <Small icon={I.bing} label="Bing マップ" />
            <Small icon={I.people} label="People Graph" />
          </Stack>
        </RibbonGroup>
        <RibbonGroup w={296} pad={6} label="グラフ" launcher>
          <Big icon={I.recChart} w={50} kana lines={["おすすめ", "グラフ"]} />
          <Stack $w={42}>
            <Small name="棒グラフ" icon={I.bar} chevron />
            <Small name="折れ線グラフ" icon={I.line} chevron />
            <Small name="円グラフ" icon={I.pie} chevron />
          </Stack>
          <Stack $w={42}>
            <Small name="階層構造" icon={I.tree} chevron />
            <Small name="ヒストグラム" icon={I.histo} chevron />
            <Small name="散布図" icon={I.scatter} chevron />
          </Stack>
          <Stack $w={42}>
            <Small name="ウォーターフォール" icon={I.water} chevron />
            <Small name="組み合わせ" icon={I.combo} chevron />
          </Stack>
          <Big icon={I.globe} w={40} kana lines={["マップ"]} chevron />
          <Big icon={I.pivotChart} w={70} kana lines={["ピボットグラフ"]} chevron />
        </RibbonGroup>
        <RibbonGroup w={57} pad={4} label="ツアー">
          <Big icon={I.map3d} w={50} kana lines={["3D", "マップ"]} inline />
        </RibbonGroup>
        <RibbonGroup w={145} pad={7} label="スパークライン">
          <Big icon={I.sparkLine} w={44} lines={["折れ線"]} />
          <Big icon={I.sparkCol} w={44} lines={["縦棒"]} />
          <Big icon={I.sparkWin} w={44} lines={["勝敗"]} />
        </RibbonGroup>
        <RibbonGroup w={110} pad={8} label="フィルター">
          <Big icon={I.slicer} w={50} kana lines={["スライサー"]} />
          <Big icon={I.timeline} w={50} kana lines={["タイム", "ライン"]} />
        </RibbonGroup>
        <RibbonGroup w={57} pad={4} label="リンク">
          <Big icon={I.link} w={50} kana lines={["リンク"]} chevron />
        </RibbonGroup>
        <RibbonGroup w={57} pad={4} label="コメント">
          <Big icon={I.comment} w={50} kana lines={["コメント"]} />
        </RibbonGroup>
        <RibbonGroup w={218} pad={8} label="テキスト">
          <Big icon={I.textbox} w={50} kana lines={["テキスト", "ボックス"]} inline pressed>
            <RedFrame $inset="-6px -8px -9px -8px" />
            <Badge $x={3} $y={-60}>7</Badge>
          </Big>
          <Big icon={I.header} w={54} kana lines={["ヘッダーと", "フッター"]} />
          <Stack $w={100}>
            <Small icon={I.wordart} label="ワードアート" kana chevron />
            <Small icon={I.sign} label="署名欄" chevron gap={12} />
            <Small icon={I.object} label="オブジェクト" kana />
          </Stack>
        </RibbonGroup>
        <RibbonGroup w={128} pad={9} label="記号と特殊文字">
          <Stack $w={116}>
            <Small icon={I.pi} label="数式" chevron gap={12} />
            <Small icon={I.omega} label="記号と特殊文字" />
          </Stack>
        </RibbonGroup>
        <Collapse aria-label="リボンを折りたたむ"><WideChevron /></Collapse>
      </RibbonCard>

      <FormulaRow>
        <Field $w={222}>
          <input aria-label="名前ボックス" defaultValue="A2" />
          <button aria-label="名前の一覧"><WideChevron /></button>
        </Field>
        <Dots><i /><i /><i /></Dots>
        <Field $w={74} $spread>
          <button aria-label="キャンセル"><Svg w={13} stroke="#c0c0c0" strokeWidth="1.200"><path d="m.5 .5 12 12M12.500 .5l-12 12" /></Svg></button>
          <button aria-label="入力"><Svg w={16} h={13} stroke="#c0c0c0" strokeWidth="1.200"><path d="m.5 7 4.500 5L15.500 .5" /></Svg></button>
          <Fx aria-label="関数の挿入">fx</Fx>
        </Field>
        <Field>
          <input aria-label="数式バー" />
          <button aria-label="数式バーの展開"><WideChevron /></button>
        </Field>
      </FormulaRow>

      <SheetArea>
        <Sheet />
        <Scroll $v>
          <Arrow w={9} h={7} d="M4.500 0 9 7H0z" />
          <Thumb $v $size={740} />
          <Rest $size={22} />
          <Arrow w={9} h={7} d="M4.500 7 9 0H0z" />
        </Scroll>
      </SheetArea>

      <SheetTabs>
        <NavButtons>
          <button aria-label="前のシート">{I.prev}</button>
          <button aria-label="次のシート">{I.next}</button>
        </NavButtons>
        <SheetTab><span>Sheet1</span></SheetTab>
        <AddSheet aria-label="新しいシート">{I.plus}</AddSheet>
        <Dots $wide><i /><i /><i /></Dots>
        <Scroll>
          <Arrow w={7} h={9} d="M0 4.500 7 0v9z" />
          <Thumb $size={666} />
          <Rest $size={24} />
          <Arrow w={7} h={9} d="M7 4.500 0 0v9z" />
        </Scroll>
      </SheetTabs>

      <StatusBar>
        <StatusText>準備完了</StatusText>
        <button aria-label="マクロの記録">{I.macro}</button>
        <ViewButtons>
          <ViewButton $on aria-label="標準">{I.viewGrid}</ViewButton>
          <ViewButton aria-label="ページ レイアウト">{I.viewPage}</ViewButton>
          <ViewButton aria-label="改ページ プレビュー">{I.viewBreak}</ViewButton>
        </ViewButtons>
        <Zoom>
          {I.zoomOut}
          <input type="range" min="0" max="100" defaultValue="50" aria-label="ズーム" />
          {I.zoomIn}
          <span>100%</span>
        </Zoom>
      </StatusBar>
    </Window>
  );
}
